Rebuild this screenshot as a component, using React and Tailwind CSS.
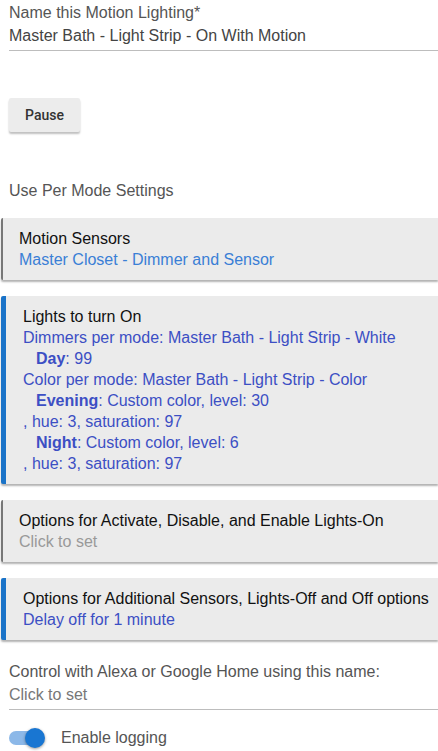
import { useState } from "react";

const font = { fontFamily: '"Liberation Sans", Arial, sans-serif' };

export default function App() {
  const [logging, setLogging] = useState(true);

  return (
    <div className="min-h-[751px] w-[438px] overflow-hidden bg-white text-[16px] leading-[21px]" style={font}>
      <div className="pl-[9px] pt-[2px]">
        <div className="text-[#555]">Name this Motion Lighting*</div>
        <div className="mt-[2px] border-b border-[#bdbdbd] pb-[4px] text-[#444]">
          Master Bath - Light Strip - On With Motion
        </div>

        <button
          type="button"
          className="mt-[47px] h-[34px] w-[71px] rounded-[2px] bg-[#ececec] text-[14px] font-medium text-[#333] shadow-[0_2px_2px_rgba(0,0,0,0.25)]"
          style={{ fontFamily: "Roboto, sans-serif" }}
        >
          Pause
        </button>

        <div className="mt-[48px] text-[#555]">Use Per Mode Settings</div>
      </div>

      <div className="mt-[17px] flex flex-col gap-[16px]">
        <Section accent="gray" title="Motion Sensors">
          <div className="text-[#3a7fd6]">Master Closet - Dimmer and Sensor</div>
        </Section>

        <Section accent="blue" title="Lights to turn On">
          <div className="text-[#3c4fc4]">
            <div>Dimmers per mode: Master Bath - Light Strip - White</div>
            <div className="pl-[13px]">
              <b className="font-semibold">Day</b>: 99
            </div>
            <div>Color per mode: Master Bath - Light Strip - Color</div>
            <div className="pl-[13px]">
              <b className="font-semibold">Evening</b>: Custom color, level: 30
            </div>
            <div>, hue: 3, saturation: 97</div>
            <div className="pl-[13px]">
              <b className="font-semibold">Night</b>: Custom color, level: 6
            </div>
            <div>, hue: 3, saturation: 97</div>
          </div>
        </Section>

        <Section accent="gray" title="Options for Activate, Disable, and Enable Lights-On">
          <div className="text-[#999]">Click to set</div>
        </Section>

        <Section accent="blue" title="Options for Additional Sensors, Lights-Off and Off options">
          <div className="text-[#3c4fc4]">Delay off for 1 minute</div>
        </Section>
      </div>

      <div className="pl-[9px] pt-[21px]">
        <div className="text-[#555]">Control with Alexa or Google Home using this name:</div>
        <div className="mt-[2px] border-b border-[#bdbdbd] pb-[4px] text-[#777]">Click to set</div>

        <label className="mt-[17px] flex cursor-pointer items-center">
          <button
            type="button"
            onClick={() => setLogging(!logging)}
            className="relative h-[14px] w-[34px] rounded-full bg-[#8cb8e8]"
          >
            <span
              className={`absolute top-1/2 h-[20px] w-[20px] -translate-y-1/2 rounded-full shadow-[0_1px_3px_rgba(0,0,0,0.4)] ${
                logging ? "left-[16px] bg-[#1976d2]" : "left-[-2px] bg-[#f5f5f5]"
              }`}
            />
          </button>
          <span className="ml-[18px] text-[#555]">Enable logging</span>
        </label>
      </div>
    </div>
  );
}

function Section({ accent, title, children }) {
  const border =
    accent === "blue" ? "border-l-[5px] border-[#1a73c8] pl-[17px]" : "border-l-[2px] border-[#777] pl-[16px]";
  return (
    <div
      className={`ml-[1px] rounded-l-[2px] bg-[#ebebeb] py-[10px] shadow-[0_2px_2px_rgba(0,0,0,0.3)] ${border}`}
    >
      <div className="text-[#111]">{title}</div>
      {children}
    </div>
  );
}
